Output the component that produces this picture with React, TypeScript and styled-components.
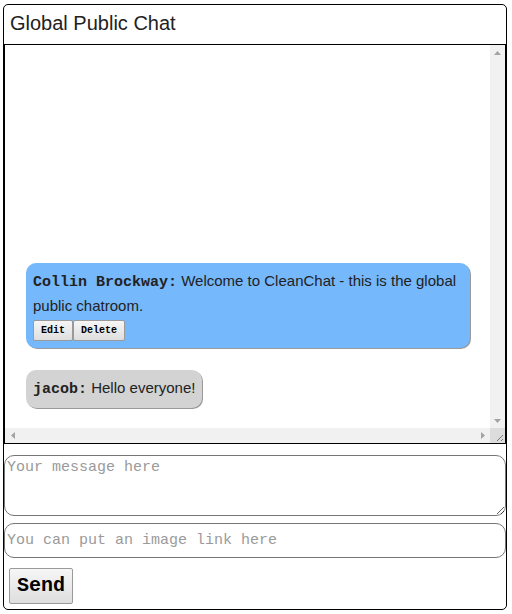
import React from "react";
import styled, { createGlobalStyle } from "styled-components";

const Global = createGlobalStyle`
  html, body { margin: 0; padding: 0; background: #fff; }
  body { font-family: "Liberation Sans", Arial, sans-serif; }
`;

const Panel = styled.div`
  box-sizing: border-box;
  margin: 4px 0 0 3px;
  width: 504px;
  height: 606px;
  border: 1px solid #000;
  border-radius: 5px;
  display: flex;
  flex-direction: column;
`;

const Title = styled.div`
  box-sizing: border-box;
  height: 39px;
  padding: 7px 0 0 6px;
  font-size: 20px;
  line-height: 23px;
  color: #222;
`;

const ChatBox = styled.div`
  box-sizing: border-box;
  width: 100%;
  height: 400px;
  border: 1px solid #000;
  display: grid;
  grid-template-columns: 1fr 15px;
  grid-template-rows: 1fr 15px;
  overflow: hidden;
`;

const MessageList = styled.div`
  min-height: 0;
  overflow: hidden;
  display: flex;
  flex-direction: column;
  justify-content: flex-end;
  align-items: flex-start;
  gap: 22px;
  padding: 0 20px 20px 21px;
`;

const VScroll = styled.div`
  background: #f1f1f1;
  display: flex;
  flex-direction: column;
  justify-content: space-between;
`;

const HScroll = styled.div`
  background: #f1f1f1;
  display: flex;
  justify-content: space-between;
`;

const ArrowCell = styled.div`
  width: 15px;
  height: 15px;
  display: flex;
  align-items: center;
  justify-content: center;
`;

const Corner = styled.div`
  background: #dcdcdc;
  display: flex;
  align-items: flex-end;
  justify-content: flex-end;
`;

const Bubble = styled.div<{ $mine?: boolean }>`
  box-sizing: border-box;
  max-width: 100%;
  width: ${(p) => (p.$mine ? "100%" : "auto")};
  background: ${(p) => (p.$mine ? "#75b8fc" : "#d3d3d3")};
  border-radius: 10px;
  box-shadow: 1px 1px 0 #9a9a9a;
  padding: 6px 7px 7px 7px;
  font-size: 15px;
  line-height: 23px;
  color: #222;
`;

const Author = styled.span`
  font-family: "Liberation Mono", "Courier New", monospace;
  font-weight: bold;
  font-size: 15px;
  color: #222;
`;

const Actions = styled.div`
  display: flex;
  margin-top: 3px;
`;

const SmallButton = styled.button`
  font-family: "Liberation Mono", "Courier New", monospace;
  font-weight: bold;
  font-size: 10px;
  height: 21px;
  padding: 0 7px;
  border: 1px solid #9a9a9a;
  background: linear-gradient(#f6f6f6, #dedede);
  color: #000;
  border-radius: 2px;
`;

const MessageInput = styled.textarea`
  box-sizing: border-box;
  display: block;
  width: 100%;
  height: 61px;
  margin-top: 11px;
  border: 1px solid #767676;
  border-radius: 10px;
  padding: 3px 2px;
  font-family: "Liberation Mono", "Courier New", monospace;
  font-size: 15px;
  &::placeholder { color: #9a9a9a; }
`;

const LinkInput = styled.input`
  box-sizing: border-box;
  display: block;
  width: 100%;
  height: 35px;
  margin-top: 7px;
  border: 1px solid #767676;
  border-radius: 10px;
  padding: 0 2px;
  font-family: "Liberation Mono", "Courier New", monospace;
  font-size: 15px;
  &::placeholder { color: #9a9a9a; }
`;

const SendButton = styled.button`
  align-self: flex-start;
  margin: 10px 0 0 5px;
  width: 64px;
  height: 36px;
  font-family: "Liberation Mono", "Courier New", monospace;
  font-weight: bold;
  font-size: 20px;
  line-height: 20px;
  color: #000;
  border: 1px solid #9a9a9a;
  border-radius: 2px;
  background: linear-gradient(#f6f6f6, #dedede);
  padding: 0;
`;

const arrows: Record<string, string> = {
  up: "0,4 7,4 3.5,0",
  down: "0,0 7,0 3.5,4",
  left: "4,0 4,7 0,3.5",
  right: "0,0 0,7 4,3.5",
};

function Arrow({ dir }: { dir: "up" | "down" | "left" | "right" }) {
  const vertical = dir === "up" || dir === "down";
  return (
    <ArrowCell>
      <svg width={vertical ? 7 : 4} height={vertical ? 4 : 7} viewBox={vertical ? "0 0 7 4" : "0 0 4 7"}>
        <polygon points={arrows[dir]} fill="#a3a3a3" />
      </svg>
    </ArrowCell>
  );
}

export default function App() {
  return (
    <>
      <Global />
      <Panel>
        <Title>Global Public Chat</Title>
        <ChatBox>
          <MessageList>
            <Bubble $mine>
              <Author>Collin Brockway:</Author> Welcome to CleanChat - this is the global public chatroom.
              <Actions>
                <SmallButton>Edit</SmallButton>
                <SmallButton>Delete</SmallButton>
              </Actions>
            </Bubble>
            <Bubble>
              <Author>jacob:</Author> Hello everyone!
            </Bubble>
          </MessageList>
          <VScroll>
            <Arrow dir="up" />
            <Arrow dir="down" />
          </VScroll>
          <HScroll>
            <Arrow dir="left" />
            <Arrow dir="right" />
          </HScroll>
          <Corner>
            <svg width="15" height="15" viewBox="0 0 15 15">
              <line x1="13" y1="7" x2="7" y2="13" stroke="#777" strokeWidth="1" />
              <line x1="13" y1="11" x2="11" y2="13" stroke="#777" strokeWidth="1" />
            </svg>
          </Corner>
        </ChatBox>
        <MessageInput placeholder="Your message here" />
        <LinkInput placeholder="You can put an image link here" />
        <SendButton>Send</SendButton>
      </Panel>
    </>
  );
}
